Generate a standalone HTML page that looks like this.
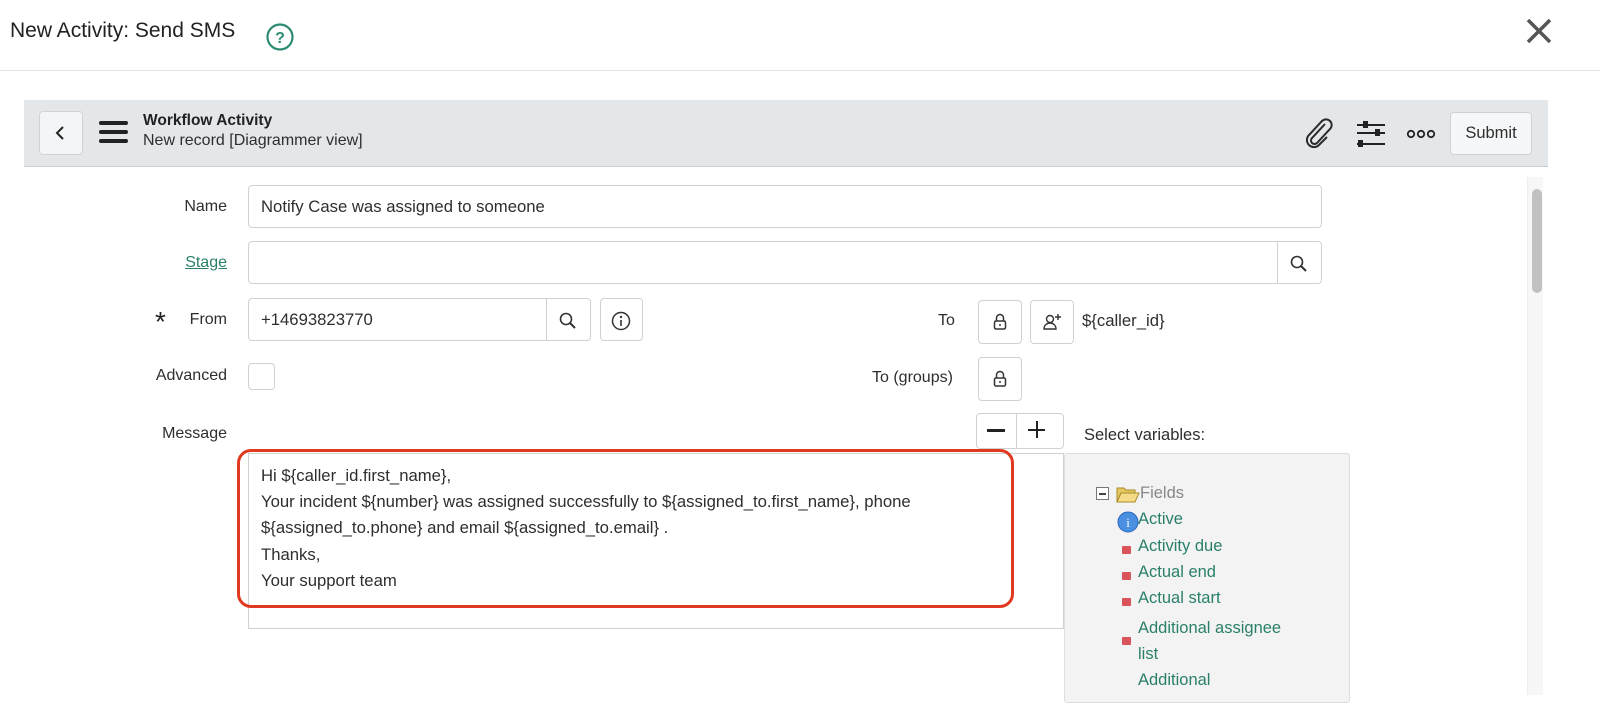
<!DOCTYPE html>
<html><head><meta charset="utf-8"><style>
*{box-sizing:border-box;margin:0;padding:0}
body{width:1600px;height:695px;overflow:hidden;background:#fff;font-family:"Liberation Sans",sans-serif;color:#2e2e2e;position:relative;font-size:16px}
.a{position:absolute;white-space:nowrap}
.box{position:absolute;border:1px solid #cfd2d5;border-radius:4px;background:#fff}
.lbl{position:absolute;white-space:nowrap;text-align:right;width:200px;font-size:16px;color:#2e2e2e}
.tree{position:absolute;left:1138px;color:#2a7f6b;font-size:16.5px;white-space:nowrap}
.red{position:absolute;left:1122px;width:9px;height:8px;background:#d9535a;border-radius:1px}
</style></head><body>
<div class="a" style="left:10px;top:19px;font-size:21px;color:#222">New Activity: Send SMS</div>
<svg class="a" style="left:265px;top:22px" width="30" height="30" viewBox="0 0 30 30"><circle cx="15" cy="15" r="12.5" fill="none" stroke="#2e8b72" stroke-width="2.2"/><text x="15" y="21" text-anchor="middle" font-family="Liberation Sans" font-weight="bold" font-size="16" fill="#2e8b72">?</text></svg>
<svg class="a" style="left:1525px;top:17px" width="28" height="28" viewBox="0 0 28 28"><path d="M3 3L25 25M25 3L3 25" stroke="#555" stroke-width="3.5"/></svg>
<div class="a" style="left:0;top:70px;width:1600px;height:1px;background:#e2e2e2"></div>

<div class="a" style="left:24px;top:100px;width:1524px;height:67px;background:#e4e7ea;border-bottom:1px solid #c9cdd1"></div>
<div class="box" style="left:39px;top:111px;width:44px;height:44px;background:#f4f5f6;border-color:#d0d3d6"></div>
<svg class="a" style="left:52px;top:124px" width="18" height="18" viewBox="0 0 18 18"><path d="M11 3L5 9L11 15" fill="none" stroke="#222" stroke-width="2"/></svg>
<div class="a" style="left:99px;top:121px;width:29px;height:4px;background:#222;border-radius:2px"></div>
<div class="a" style="left:99px;top:130px;width:29px;height:4px;background:#222;border-radius:2px"></div>
<div class="a" style="left:99px;top:139px;width:29px;height:4px;background:#222;border-radius:2px"></div>
<div class="a" style="left:143px;top:112px;font-size:15.5px;font-weight:bold;color:#222">Workflow Activity</div>
<div class="a" style="left:143px;top:132px;font-size:16px;color:#2e2e2e">New record [Diagrammer view]</div>
<svg class="a" style="left:1303px;top:118px" width="32" height="32" viewBox="0 0 32 32"><path d="M22 6L9 20a3.5 3.5 0 0 0 5 5L27 11a5.5 5.5 0 0 0-8-8L6 17a7 7 0 0 0 10 10L24 19" fill="none" stroke="#2b2b2b" stroke-width="2"/></svg>
<svg class="a" style="left:1355px;top:119px" width="32" height="32" viewBox="0 0 32 32"><path d="M2 6H30M2 14H30M2 25H30" stroke="#222" stroke-width="2"/><rect x="8" y="2" width="5" height="7" fill="#222"/><rect x="20" y="10" width="5" height="7" fill="#222"/><rect x="3" y="21" width="5" height="7" fill="#222"/></svg>
<svg class="a" style="left:1406px;top:128px" width="32" height="12" viewBox="0 0 32 12"><circle cx="5" cy="6" r="3.2" fill="none" stroke="#222" stroke-width="1.8"/><circle cx="15" cy="6" r="3.2" fill="none" stroke="#222" stroke-width="1.8"/><circle cx="25" cy="6" r="3.2" fill="none" stroke="#222" stroke-width="1.8"/></svg>
<div class="box" style="left:1450px;top:112px;width:82px;height:43px;background:#f6f7f8;border-color:#cfd2d5;font-size:16.5px;text-align:center;line-height:41px;color:#2e2e2e">Submit</div>

<div class="a" style="left:1527px;top:177px;width:16px;height:518px;background:#f7f7f7;border-left:1px solid #eee"></div>
<div class="a" style="left:1532px;top:189px;width:10px;height:104px;background:#c1c1c1;border-radius:5px"></div>

<div class="lbl" style="left:27px;top:198px">Name</div>
<div class="box" style="left:248px;top:185px;width:1074px;height:43px"></div>
<div class="a" style="left:261px;top:197px;font-size:16.7px">Notify Case was assigned to someone</div>

<div class="lbl" style="left:27px;top:254px;color:#2a7f6b;text-decoration:underline">Stage</div>
<div class="box" style="left:248px;top:241px;width:1074px;height:43px"></div>
<div class="a" style="left:1277px;top:242px;width:1px;height:41px;background:#cfd2d5"></div>
<svg class="a" style="left:1289px;top:254px" width="20" height="20" viewBox="0 0 20 20"><circle cx="8" cy="8" r="5.5" fill="none" stroke="#333" stroke-width="1.6"/><path d="M12 12L17 17" stroke="#333" stroke-width="2"/></svg>

<div class="a" style="left:155px;top:309px;font-size:28px;line-height:26px;color:#222">*</div>
<div class="lbl" style="left:27px;top:311px">From</div>
<div class="box" style="left:248px;top:298px;width:343px;height:43px"></div>
<div class="a" style="left:261px;top:310px;font-size:16.7px">+14693823770</div>
<div class="a" style="left:546px;top:299px;width:1px;height:41px;background:#cfd2d5"></div>
<svg class="a" style="left:558px;top:311px" width="20" height="20" viewBox="0 0 20 20"><circle cx="8" cy="8" r="5.5" fill="none" stroke="#333" stroke-width="1.6"/><path d="M12 12L17 17" stroke="#333" stroke-width="2"/></svg>
<div class="box" style="left:600px;top:298px;width:43px;height:43px"></div>
<svg class="a" style="left:610px;top:310px" width="22" height="22" viewBox="0 0 22 22"><circle cx="11" cy="11" r="8.5" fill="none" stroke="#333" stroke-width="1.5"/><circle cx="11" cy="7" r="1.2" fill="#333"/><path d="M11 10V16" stroke="#333" stroke-width="1.6"/></svg>

<div class="a" style="left:938px;top:312px">To</div>
<div class="box" style="left:978px;top:300px;width:44px;height:44px"></div>
<svg class="a" style="left:990px;top:312px" width="20" height="20" viewBox="0 0 20 20"><path d="M6.5 9V6a3.5 3.5 0 0 1 7 0V9" fill="none" stroke="#333" stroke-width="1.5"/><rect x="4.5" y="9" width="11" height="8" rx="1.5" fill="none" stroke="#333" stroke-width="1.5"/><path d="M10 12V14" stroke="#333" stroke-width="1.5"/></svg>
<div class="box" style="left:1030px;top:300px;width:44px;height:44px"></div>
<svg class="a" style="left:1041px;top:311px" width="22" height="22" viewBox="0 0 22 22"><circle cx="9" cy="8" r="3.5" fill="none" stroke="#333" stroke-width="1.4"/><path d="M3 18c0-4 3-6 6-6s6 2 6 6z" fill="none" stroke="#333" stroke-width="1.4"/><path d="M17 3V9M14 6H20" stroke="#333" stroke-width="1.4"/></svg>
<div class="a" style="left:1082px;top:311px;font-size:16.7px">${caller_id}</div>

<div class="lbl" style="left:27px;top:367px">Advanced</div>
<div class="box" style="left:248px;top:363px;width:27px;height:27px"></div>
<div class="a" style="left:872px;top:369px">To (groups)</div>
<div class="box" style="left:978px;top:357px;width:44px;height:44px"></div>
<svg class="a" style="left:990px;top:369px" width="20" height="20" viewBox="0 0 20 20"><path d="M6.5 9V6a3.5 3.5 0 0 1 7 0V9" fill="none" stroke="#333" stroke-width="1.5"/><rect x="4.5" y="9" width="11" height="8" rx="1.5" fill="none" stroke="#333" stroke-width="1.5"/><path d="M10 12V14" stroke="#333" stroke-width="1.5"/></svg>

<div class="lbl" style="left:27px;top:425px">Message</div>
<div class="box" style="left:976px;top:413px;width:88px;height:36px"></div>
<div class="a" style="left:1016px;top:414px;width:1px;height:34px;background:#cfd2d5"></div>
<div class="a" style="left:987px;top:429px;width:18px;height:2.5px;background:#222"></div>
<div class="a" style="left:1028px;top:429px;width:17px;height:2px;background:#222"></div>
<div class="a" style="left:1035.5px;top:421px;width:2px;height:17px;background:#222"></div>
<div class="a" style="left:1084px;top:426px;font-size:16.5px">Select variables:</div>

<div class="a" style="left:248px;top:453px;width:816px;height:176px;border:1px solid #cfd2d5;background:#fff"></div>
<div class="a" style="left:237px;top:449px;width:777px;height:159px;border:3px solid #e0391f;border-radius:14px"></div>
<div class="a" style="left:261px;top:463px;font-size:16.7px;line-height:26.2px">Hi ${caller_id.first_name},<br>Your incident ${number} was assigned successfully to ${assigned_to.first_name}, phone<br>${assigned_to.phone} and email ${assigned_to.email} .<br>Thanks,<br>Your support team</div>

<div class="a" style="left:1064px;top:453px;width:286px;height:250px;background:#f3f3f3;border:1px solid #ddd;border-radius:3px"></div>
<div class="a" style="left:1096px;top:487px;width:13px;height:13px;border:1px solid #777;background:#fff"></div>
<div class="a" style="left:1099px;top:493px;width:7px;height:1.5px;background:#444"></div>
<svg class="a" style="left:1116px;top:486px" width="24" height="17" viewBox="0 0 24 17"><path d="M1 2h7l2 2h9v3H5L1 16z" fill="#e5c760" stroke="#a88a2a" stroke-width="1"/><path d="M1 16L5 7h18l-4 9z" fill="#f4dc86" stroke="#a88a2a" stroke-width="1"/></svg>
<div class="a" style="left:1140px;top:484px;font-size:16.5px;color:#888">Fields</div>
<svg class="a" style="left:1117px;top:511px" width="22" height="22" viewBox="0 0 22 22"><circle cx="11" cy="11" r="10" fill="#4a8fe0" stroke="#2a66bb"/><text x="11" y="16" text-anchor="middle" font-family="Liberation Serif" font-size="13" fill="#fff">i</text></svg>
<div class="tree" style="top:510px">Active</div>
<div class="red" style="top:546px"></div><div class="tree" style="top:537px">Activity due</div>
<div class="red" style="top:572px"></div><div class="tree" style="top:563px">Actual end</div>
<div class="red" style="top:598px"></div><div class="tree" style="top:589px">Actual start</div>
<div class="red" style="top:637px"></div><div class="tree" style="top:615px;line-height:26px">Additional assignee<br>list<br>Additional</div>
</body></html>
